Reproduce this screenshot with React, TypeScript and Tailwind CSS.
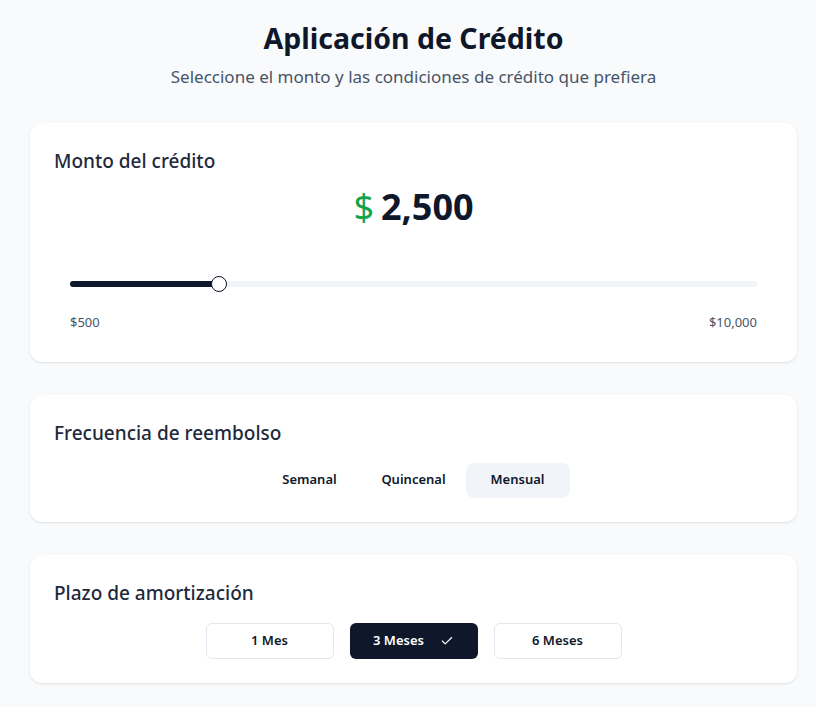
import React from "react";

const font = { fontFamily: '"Noto Sans", "Open Sans", sans-serif' };

function Card({ title, children, className = "" }: { title: string; children: React.ReactNode; className?: string }) {
  return (
    <div className={`bg-white rounded-xl shadow-[0_1px_3px_rgba(0,0,0,0.08),0_1px_2px_rgba(0,0,0,0.04)] px-6 ${className}`}>
      <h2 className="text-[19px] font-medium text-[#1e293b] leading-7">{title}</h2>
      {children}
    </div>
  );
}

export default function App() {
  const pct = ((2500 - 500) / (10000 - 500)) * 100;
  const offset = 8 - (pct / 50) * 8;
  return (
    <div className="min-h-screen bg-[#f8fafc] pl-[30px] pr-[19px] pt-[20px] pb-6" style={font}>
      <div className="text-center">
        <h1 className="text-[28.5px] font-bold text-[#0f172a] leading-9">Aplicación de Crédito</h1>
        <p className="mt-[9px] text-[17px] text-[#475569] leading-6">Seleccione el monto y las condiciones de crédito que prefiera</p>
      </div>

      <Card title="Monto del crédito" className="mt-[34px] pt-[24px] pb-[29px]">
        <div className="flex items-center justify-center gap-[7px] mt-[12px]">
          <span className="text-[36px] text-[#16a34a] leading-10">$</span>
          <span className="text-[36px] font-bold text-[#0f172a] leading-10">2,500</span>
        </div>
        <div className="px-4 mt-[54px]">
          <div className="relative h-[6px] rounded-full bg-[#f1f5f9]">
            <div className="absolute left-0 top-0 h-full rounded-full bg-[#0f172a]" style={{ width: `${pct}%` }} />
            <div
              className="absolute top-1/2 w-4 h-4 -translate-y-1/2 -translate-x-1/2 rounded-full bg-white border-[1.5px] border-[#0f172a]"
              style={{ left: `calc(${pct}% + ${offset}px)` }}
            />
          </div>
          <div className="flex justify-between mt-[26px] text-[13px] text-[#475569]">
            <span>$500</span>
            <span>$10,000</span>
          </div>
        </div>
      </Card>

      <Card title="Frecuencia de reembolso" className="mt-[33px] pt-[24px] pb-[24px]">
        <div className="flex justify-center mt-[16px]">
          {["Semanal", "Quincenal", "Mensual"].map((l) => (
            <button
              key={l}
              className={`w-[104px] h-[35px] rounded-lg text-[13px] font-semibold text-[#0f172a] ${l === "Mensual" ? "bg-[#f1f5f9]" : ""}`}
            >
              {l}
            </button>
          ))}
        </div>
      </Card>

      <Card title="Plazo de amortización" className="mt-[33px] pt-[24px] pb-[24px]">
        <div className="flex justify-center gap-4 mt-[16px]">
          {["1 Mes", "3 Meses", "6 Meses"].map((l) => {
            const sel = l === "3 Meses";
            return (
              <button
                key={l}
                className={`w-[128px] h-[36px] rounded-md text-[13px] font-semibold flex items-center justify-center gap-[16px] ${
                  sel ? "bg-[#0f172a] text-white" : "bg-white border border-[#e2e8f0] text-[#0f172a]"
                }`}
              >
                <span>{l}</span>
                {sel && (
                  <svg width="14" height="14" viewBox="0 0 24 24" fill="none" stroke="currentColor" strokeWidth="2" strokeLinecap="round" strokeLinejoin="round">
                    <path d="M20 6 9 17l-5-5" />
                  </svg>
                )}
              </button>
            );
          })}
        </div>
      </Card>
    </div>
  );
}
